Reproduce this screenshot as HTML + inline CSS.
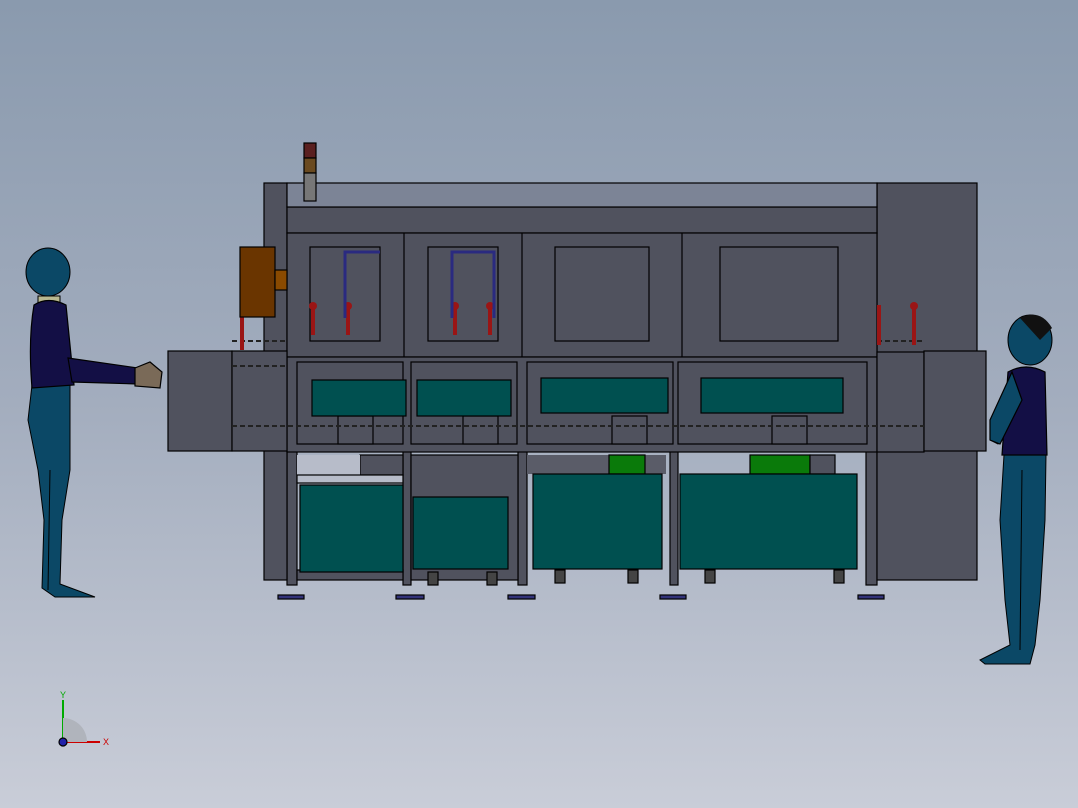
<!DOCTYPE html>
<html><head><style>
html,body{margin:0;padding:0;width:1078px;height:808px;overflow:hidden}
body{background:linear-gradient(#8a9aae 0%,#a3adbe 50%,#c9cdd8 100%);font-family:"Liberation Sans",sans-serif}
svg{position:absolute;left:0;top:0}
</style></head><body>
<svg width="1078" height="808" viewBox="0 0 1078 808" stroke="#000" stroke-width="1.2">
<g fill="#50525e">
<rect x="287" y="440" width="10" height="145"/><rect x="403" y="440" width="8" height="145"/>
<rect x="518" y="440" width="9" height="145"/><rect x="670" y="440" width="8" height="145"/>
<rect x="866" y="440" width="11" height="145"/>
<rect x="264" y="183" width="23" height="397"/>
<rect x="877" y="183" width="100" height="397"/>
<rect x="287" y="207" width="590" height="26"/>
<rect x="287" y="233" width="590" height="124"/>
<line x1="404" y1="233" x2="404" y2="357"/><line x1="522" y1="233" x2="522" y2="357"/><line x1="682" y1="233" x2="682" y2="357"/>
<rect x="310" y="247" width="70" height="94"/><rect x="428" y="247" width="70" height="94"/>
<rect x="555" y="247" width="94" height="94"/><rect x="720" y="247" width="118" height="94"/>
<rect x="287" y="357" width="590" height="95"/>
<rect x="297" y="362" width="106" height="82"/><rect x="411" y="362" width="106" height="82"/>
<rect x="527" y="362" width="146" height="82"/><rect x="678" y="362" width="189" height="82"/>
<rect x="338" y="416" width="35" height="28"/><rect x="463" y="416" width="35" height="28"/>
<rect x="612" y="416" width="35" height="28"/><rect x="772" y="416" width="35" height="28"/>
<rect x="877" y="352" width="47" height="100"/>
<rect x="168" y="351" width="64" height="100"/><rect x="232" y="351" width="55" height="100"/>
<rect x="924" y="351" width="62" height="100"/>
<rect x="411" y="455" width="107" height="125"/>
<rect x="297" y="570" width="106" height="10"/>
<rect x="360" y="455" width="43" height="20"/>
</g>
<rect x="287" y="183" width="590" height="24" fill="#7c8496"/>
<rect x="297" y="455" width="63" height="20" fill="#b7bcc9" stroke="none"/>
<rect x="297" y="475" width="106" height="8" fill="#b7bcc9"/>
<rect x="527" y="455" width="139" height="19" fill="#5a5c68" stroke="none"/>
<rect x="609" y="455" width="36" height="19" fill="#0a7a0a"/>
<rect x="750" y="455" width="60" height="19" fill="#0a7a0a"/>
<rect x="810" y="455" width="25" height="19" fill="#50525e"/>
<g fill="#005050">
<rect x="312" y="380" width="94" height="36"/><rect x="417" y="380" width="94" height="36"/>
<rect x="541" y="378" width="127" height="35"/><rect x="701" y="378" width="142" height="35"/>
<rect x="300" y="485" width="103" height="87"/><rect x="413" y="497" width="95" height="72"/>
<rect x="533" y="474" width="129" height="95"/><rect x="680" y="474" width="177" height="95"/>
</g>
<g stroke="#222" stroke-width="2" stroke-dasharray="5 3">
<line x1="232" y1="426" x2="924" y2="426"/><line x1="232" y1="341" x2="287" y2="341"/><line x1="877" y1="341" x2="924" y2="341"/>
<line x1="232" y1="366" x2="287" y2="366"/>
</g>
<g fill="#9a1515" stroke="none">
<rect x="311" y="305" width="4" height="30"/><rect x="346" y="305" width="4" height="30"/><rect x="453" y="305" width="4" height="30"/><rect x="488" y="305" width="4" height="30"/>
<rect x="240" y="305" width="4" height="45"/><rect x="877" y="305" width="4" height="40"/><rect x="912" y="305" width="4" height="40"/>
<circle cx="313" cy="306" r="4"/><circle cx="348" cy="306" r="4"/><circle cx="455" cy="306" r="4"/><circle cx="490" cy="306" r="4"/><circle cx="914" cy="306" r="4"/>
</g>
<g stroke="#2a2a80" stroke-width="3" fill="none">
<path d="M345 318V252h35"/><path d="M452 318V252h42v66"/>
</g>
<rect x="240" y="247" width="35" height="70" fill="#6a3500"/><rect x="275" y="270" width="12" height="20" fill="#8a4a00"/>
<rect x="304" y="143" width="12" height="15" fill="#5a2020"/><rect x="304" y="158" width="12" height="15" fill="#6a4a20"/><rect x="304" y="173" width="12" height="28" fill="#777"/>
<g fill="#33337a">
<rect x="278" y="595" width="26" height="4"/><rect x="396" y="595" width="28" height="4"/><rect x="508" y="595" width="27" height="4"/><rect x="660" y="595" width="26" height="4"/><rect x="858" y="595" width="26" height="4"/>
</g>
<g fill="#444"><rect x="428" y="572" width="10" height="13"/><rect x="487" y="572" width="10" height="13"/><rect x="555" y="570" width="10" height="13"/><rect x="628" y="570" width="10" height="13"/><rect x="705" y="570" width="10" height="13"/><rect x="834" y="570" width="10" height="13"/></g>
<!-- left person -->
<g fill="#0b4866" stroke="#000" stroke-width="1">
<path d="M32 385 L28 420 L38 470 L44 520 L42 588 L55 597 L95 597 L60 584 L62 520 L70 470 L70 385Z"/>
<line x1="50" y1="470" x2="48" y2="590"/>
<ellipse cx="48" cy="272" rx="22" ry="24"/>
<path d="M38 296h22v12H38z" fill="#b8b890"/>
</g>
<path d="M34 305 Q48 296 66 305 L74 385 L32 388 Q28 340 34 305Z" fill="#130f45" stroke="#000"/>
<path d="M68 358 L138 368 L138 384 L72 382Z" fill="#130f45" stroke="#000"/>
<path d="M135 368 L150 362 L162 372 L160 388 L135 386Z" fill="#7a6a58" stroke="#000"/>
<!-- right person -->
<g fill="#0b4866" stroke="#000" stroke-width="1">
<path d="M1004 455 L1000 520 L1005 600 L1010 645 L980 660 L985 664 L1030 664 L1035 645 L1040 600 L1045 520 L1046 455Z"/>
<line x1="1022" y1="470" x2="1020" y2="650"/>
<ellipse cx="1030" cy="340" rx="22" ry="25"/>
<path d="M1015 380 L990 420 L990 440 L998 444 L1025 400Z"/>
</g>
<path d="M1020 318 Q1040 308 1052 328 L1040 340Z" fill="#111" stroke="none"/>
<path d="M1008 372 Q1026 362 1045 372 L1047 455 L1002 455 Z" fill="#130f45" stroke="#000"/>
<path d="M1012 372 L990 420 L990 440 L1000 444 L1022 400Z" fill="#0b4866" stroke="#000"/>
<g stroke-width="2" fill="none">
<line x1="63" y1="742" x2="63" y2="700" stroke="#0a0"/><line x1="63" y1="742" x2="100" y2="742" stroke="#c00"/>
</g>
<path d="M63 718 A24 24 0 0 1 87 742 L63 742Z" fill="#b0b4bc" stroke="none"/>
<circle cx="63" cy="742" r="4" fill="#22a"/>
<text x="60" y="698" font-size="9" fill="#0a0" stroke="none">Y</text>
<text x="103" y="745" font-size="9" fill="#c00" stroke="none">X</text>
</svg>
</body></html>
